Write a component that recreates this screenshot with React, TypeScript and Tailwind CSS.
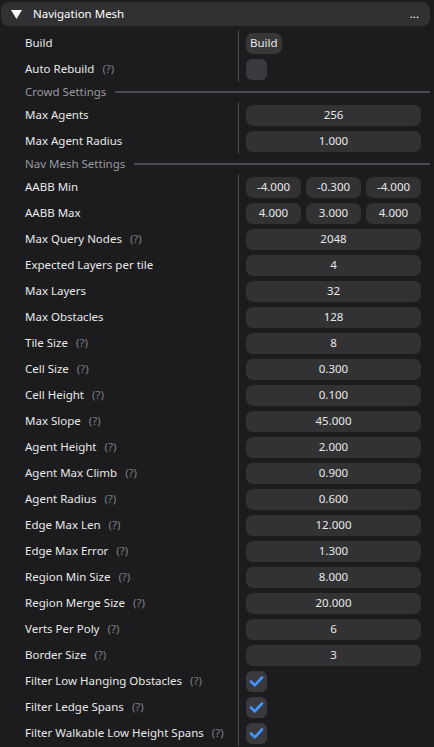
import React from "react";

type Row =
  | { kind: "value"; label: string; help?: boolean; value: string }
  | { kind: "vec3"; label: string; help?: boolean; values: string[] }
  | { kind: "check"; label: string; help?: boolean; checked: boolean }
  | { kind: "button"; label: string; help?: boolean; text: string };

const topRows: Row[] = [
  { kind: "button", label: "Build", text: "Build" },
  { kind: "check", label: "Auto Rebuild", help: true, checked: false },
];

const crowdRows: Row[] = [
  { kind: "value", label: "Max Agents", value: "256" },
  { kind: "value", label: "Max Agent Radius", value: "1.000" },
];

const navRows: Row[] = [
  { kind: "vec3", label: "AABB Min", values: ["-4.000", "-0.300", "-4.000"] },
  { kind: "vec3", label: "AABB Max", values: ["4.000", "3.000", "4.000"] },
  { kind: "value", label: "Max Query Nodes", help: true, value: "2048" },
  { kind: "value", label: "Expected Layers per tile", value: "4" },
  { kind: "value", label: "Max Layers", value: "32" },
  { kind: "value", label: "Max Obstacles", value: "128" },
  { kind: "value", label: "Tile Size", help: true, value: "8" },
  { kind: "value", label: "Cell Size", help: true, value: "0.300" },
  { kind: "value", label: "Cell Height", help: true, value: "0.100" },
  { kind: "value", label: "Max Slope", help: true, value: "45.000" },
  { kind: "value", label: "Agent Height", help: true, value: "2.000" },
  { kind: "value", label: "Agent Max Climb", help: true, value: "0.900" },
  { kind: "value", label: "Agent Radius", help: true, value: "0.600" },
  { kind: "value", label: "Edge Max Len", help: true, value: "12.000" },
  { kind: "value", label: "Edge Max Error", help: true, value: "1.300" },
  { kind: "value", label: "Region Min Size", help: true, value: "8.000" },
  { kind: "value", label: "Region Merge Size", help: true, value: "20.000" },
  { kind: "value", label: "Verts Per Poly", help: true, value: "6" },
  { kind: "value", label: "Border Size", help: true, value: "3" },
  { kind: "check", label: "Filter Low Hanging Obstacles", help: true, checked: true },
  { kind: "check", label: "Filter Ledge Spans", help: true, checked: true },
  { kind: "check", label: "Filter Walkable Low Height Spans", help: true, checked: true },
];

function Checkbox({ checked }: { checked: boolean }) {
  return (
    <div className="w-[21px] h-[21px] rounded-[6px] bg-[#3a3a3e] flex items-center justify-center">
      {checked && (
        <svg width="21" height="21" viewBox="0 0 21 21">
          <path d="M5 10.5 L8.8 14.3 L16 6.5" fill="none" stroke="#4296fa" strokeWidth="2.6" strokeLinecap="round" strokeLinejoin="round" />
        </svg>
      )}
    </div>
  );
}

function Widget({ row }: { row: Row }) {
  if (row.kind === "value") {
    return (
      <div className="w-[175px] h-[21px] rounded-[7px] bg-[#323235] flex items-center justify-center text-[#e8e8e8]">
        {row.value}
      </div>
    );
  }
  if (row.kind === "vec3") {
    return (
      <div className="w-[175px] flex gap-[5px]">
        {row.values.map((v, i) => (
          <div key={i} className="flex-1 h-[21px] rounded-[7px] bg-[#323235] flex items-center justify-center text-[#e8e8e8]">
            {v}
          </div>
        ))}
      </div>
    );
  }
  if (row.kind === "check") return <Checkbox checked={row.checked} />;
  return (
    <div className="h-[21px] px-[4px] rounded-[7px] bg-[#37373a] flex items-center text-[#e8e8e8]">
      {row.text}
    </div>
  );
}

function Table({ rows }: { rows: Row[] }) {
  return (
    <div className="flex flex-col">
      {rows.map((row) => (
        <div key={row.label} className="flex h-[26px]">
          <div className="w-[238px] pl-[25px] flex items-center text-[#e8e8e8]">
            <span>{row.label}</span>
            {row.help && <span className="ml-[8px] text-[#7c7c80]">(?)</span>}
          </div>
          <div className="border-l border-[#48484e] pl-[7px] flex items-center">
            <Widget row={row} />
          </div>
        </div>
      ))}
    </div>
  );
}

function SectionHeader({ title }: { title: string }) {
  return (
    <div className="h-[20px] pl-[25px] pr-[4px] flex items-center">
      <span className="text-[#9a9a9e]">{title}</span>
      <div className="flex-1 h-[2px] bg-[#4c4c52] ml-[9px]" />
    </div>
  );
}

export default function App() {
  return (
    <div
      className="w-[434px] h-[747px] overflow-hidden bg-[#1c1c1f] text-[11.5px] leading-none"
      style={{ fontFamily: '"Noto Sans", "Open Sans", sans-serif' }}
    >
      <div className="ml-[1px] mt-[2px] mr-[4px] h-[24px] rounded-[8px] bg-[#313134] flex items-center pl-[10px] pr-[11px] text-white">
        <svg width="11" height="9" viewBox="0 0 11 9" className="mr-[11px]">
          <path d="M0 0 H11 L5.5 9 Z" fill="#ffffff" />
        </svg>
        <span className="flex-1">Navigation Mesh</span>
        <span className="text-[11.5px]">...</span>
      </div>
      <div className="pt-[4px]">
        <Table rows={topRows} />
        <SectionHeader title="Crowd Settings" />
        <Table rows={crowdRows} />
        <SectionHeader title="Nav Mesh Settings" />
        <Table rows={navRows} />
      </div>
    </div>
  );
}
